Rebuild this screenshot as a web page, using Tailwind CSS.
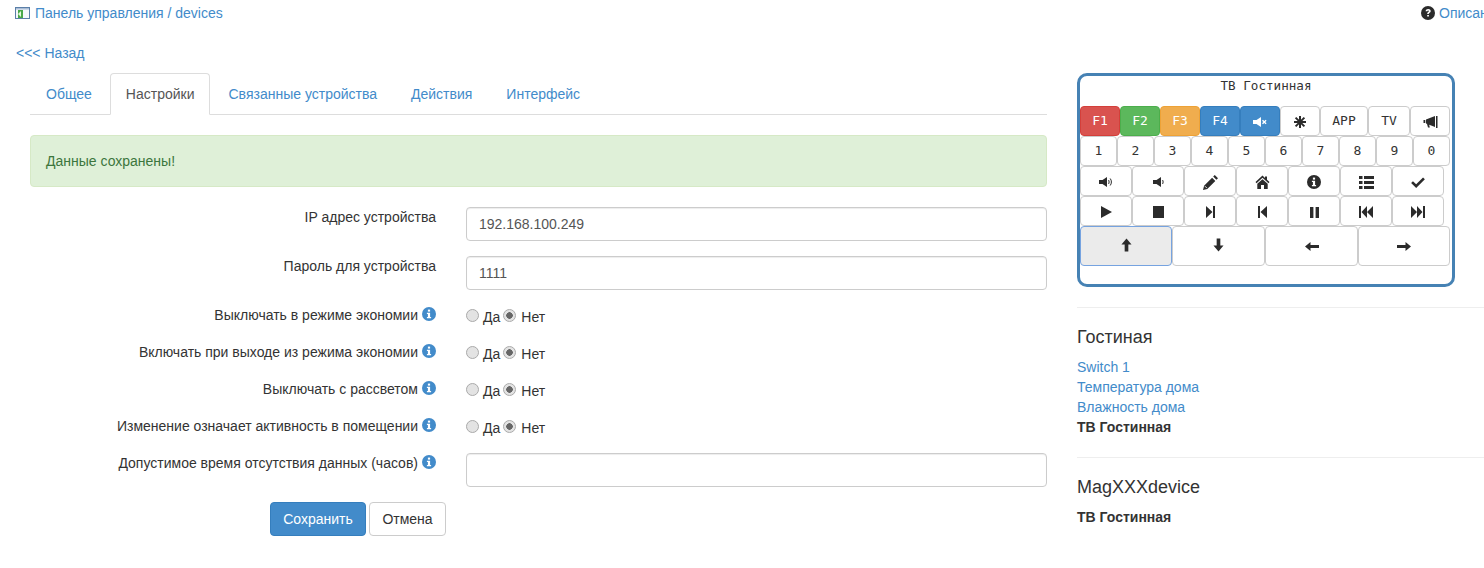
<!DOCTYPE html>
<html lang="ru">
<head>
    <meta charset="UTF-8">
    <meta name="viewport" content="width=device-width, initial-scale=1.0">
    <title>Панель управления / devices</title>
    <script src="https://cdn.jsdelivr.net/npm/@tailwindcss/browser@4"></script>
</head>
<body class="overflow-hidden bg-white text-[14px] leading-5 text-[#333] font-['Liberation_Sans',Arial,sans-serif]">
<div class="w-[1500px] h-[568px]">

    <!-- Top line -->
    <div class="flex justify-between pt-[3px] pl-[15px] h-[23px]">
        <a class="flex items-center text-[#428bca]">
            <svg class="w-[16px] h-[14px] mr-[4px]" viewBox="0 0 16 14"><rect x="0.5" y="1.5" width="14" height="11" fill="#f4f7fb" stroke="#5b7fa8"/><rect x="1" y="2" width="13" height="1.5" fill="#a9bdd6"/><rect x="3" y="4" width="5" height="8" fill="#4aa84a"/><path d="M3 8l3-3v6z" fill="#e4f8dc"/></svg>
            Панель управления / devices
        </a>
        <a class="flex items-center text-[#428bca] w-[79px]">
            <svg class="w-[14px] h-[14px] mr-[4px] shrink-0" viewBox="0 0 14 14"><circle cx="7" cy="7" r="7" fill="#2b2b2b"/><path d="M4.6 5.2C4.8 3.8 5.8 3 7.2 3c1.5 0 2.5.8 2.5 2 0 1-.6 1.5-1.3 2-.5.3-.6.5-.6 1H6.2c0-1 .3-1.5 1-2 .5-.3.7-.6.7-.9 0-.4-.3-.6-.7-.6-.5 0-.8.3-.9.8z M6.2 9h1.7v1.6H6.2z" fill="#fff"/></svg>
            Описание
        </a>
    </div>

    <div class="pt-[20px] pl-[16px] h-[50px]"><a class="text-[#428bca]">&lt;&lt;&lt; Назад</a></div>

    <div class="flex">
        <!-- Left column -->
        <div class="ml-[30px] w-[1017px]">
            <div class="flex h-[42px] border-b border-[#ddd]">
                <a class="h-[41px] px-[16px] pt-[11px] mr-[2px] text-[#428bca]">Общее</a>
                <a class="h-[42px] pl-[15px] pr-[14px] pt-[10px] mr-[3px] bg-white border border-[#ddd] border-b-white rounded-t-[4px] text-[#555]">Настройки</a>
                <a class="h-[41px] px-[16px] pt-[11px] mr-[2px] text-[#428bca]">Связанные устройства</a>
                <a class="h-[41px] px-[16px] pt-[11px] mr-[2px] text-[#428bca]">Действия</a>
                <a class="h-[41px] px-[16px] pt-[11px] text-[#428bca]">Интерфейс</a>
            </div>

            <div class="mt-[20px] h-[52px] p-[15px] border border-[#d6e9c6] bg-[#dff0d8] rounded-[4px] text-[#3c763d]">Данные сохранены!</div>

            <form class="mt-[20px]">
                <div class="flex h-[34px] mb-[15px]">
                    <label class="w-[406px] text-right">IP адрес устройства</label>
                    <input class="ml-[30px] w-[581px] h-[34px] px-[12px] border border-[#ccc] rounded-[4px] text-[#555] shadow-[inset_0_1px_1px_rgba(0,0,0,0.075)]" value="192.168.100.249">
                </div>
                <div class="flex h-[34px] mb-[15px]">
                    <label class="w-[406px] text-right">Пароль для устройства</label>
                    <input class="ml-[30px] w-[581px] h-[34px] px-[12px] border border-[#ccc] rounded-[4px] text-[#555] shadow-[inset_0_1px_1px_rgba(0,0,0,0.075)]" value="1111">
                </div>

                <div class="flex h-[37px]">
                    <label class="flex justify-end items-start w-[406px]">Выключать в режиме экономии
                        <svg class="w-[14px] h-[14px] ml-[4px] mt-[2px]" viewBox="0 0 14 14"><circle cx="7" cy="7" r="7" fill="#428bca"/><rect x="5.9" y="2.6" width="2.2" height="2" fill="#fff"/><path d="M4.9 5.7h3.2v4.2h1v1.4H4.9V9.9h1V7.1h-1z" fill="#fff"/></svg>
                    </label>
                    <div class="flex items-start ml-[30px] pt-[1px]">
                        <input type="radio" name="r1" class="appearance-none w-[13px] h-[13px] mt-[3px] rounded-full border border-[#aaa] bg-[#e3e3e3]">
                        <span class="mt-[1px] ml-[4px] mr-[3px]">Да</span>
                        <input type="radio" name="r1" checked class="appearance-none w-[13px] h-[13px] mt-[3px] rounded-full border border-[#aaa] bg-[radial-gradient(circle,#666_0_3px,#e3e3e3_3.5px)]">
                        <span class="mt-[1px] ml-[5px]">Нет</span>
                    </div>
                </div>
                <div class="flex h-[37px]">
                    <label class="flex justify-end items-start w-[406px]">Включать при выходе из режима экономии
                        <svg class="w-[14px] h-[14px] ml-[4px] mt-[2px]" viewBox="0 0 14 14"><circle cx="7" cy="7" r="7" fill="#428bca"/><rect x="5.9" y="2.6" width="2.2" height="2" fill="#fff"/><path d="M4.9 5.7h3.2v4.2h1v1.4H4.9V9.9h1V7.1h-1z" fill="#fff"/></svg>
                    </label>
                    <div class="flex items-start ml-[30px] pt-[1px]">
                        <input type="radio" name="r2" class="appearance-none w-[13px] h-[13px] mt-[3px] rounded-full border border-[#aaa] bg-[#e3e3e3]">
                        <span class="mt-[1px] ml-[4px] mr-[3px]">Да</span>
                        <input type="radio" name="r2" checked class="appearance-none w-[13px] h-[13px] mt-[3px] rounded-full border border-[#aaa] bg-[radial-gradient(circle,#666_0_3px,#e3e3e3_3.5px)]">
                        <span class="mt-[1px] ml-[5px]">Нет</span>
                    </div>
                </div>
                <div class="flex h-[37px]">
                    <label class="flex justify-end items-start w-[406px]">Выключать с рассветом
                        <svg class="w-[14px] h-[14px] ml-[4px] mt-[2px]" viewBox="0 0 14 14"><circle cx="7" cy="7" r="7" fill="#428bca"/><rect x="5.9" y="2.6" width="2.2" height="2" fill="#fff"/><path d="M4.9 5.7h3.2v4.2h1v1.4H4.9V9.9h1V7.1h-1z" fill="#fff"/></svg>
                    </label>
                    <div class="flex items-start ml-[30px] pt-[1px]">
                        <input type="radio" name="r3" class="appearance-none w-[13px] h-[13px] mt-[3px] rounded-full border border-[#aaa] bg-[#e3e3e3]">
                        <span class="mt-[1px] ml-[4px] mr-[3px]">Да</span>
                        <input type="radio" name="r3" checked class="appearance-none w-[13px] h-[13px] mt-[3px] rounded-full border border-[#aaa] bg-[radial-gradient(circle,#666_0_3px,#e3e3e3_3.5px)]">
                        <span class="mt-[1px] ml-[5px]">Нет</span>
                    </div>
                </div>
                <div class="flex h-[37px]">
                    <label class="flex justify-end items-start w-[406px]">Изменение означает активность в помещении
                        <svg class="w-[14px] h-[14px] ml-[4px] mt-[2px]" viewBox="0 0 14 14"><circle cx="7" cy="7" r="7" fill="#428bca"/><rect x="5.9" y="2.6" width="2.2" height="2" fill="#fff"/><path d="M4.9 5.7h3.2v4.2h1v1.4H4.9V9.9h1V7.1h-1z" fill="#fff"/></svg>
                    </label>
                    <div class="flex items-start ml-[30px] pt-[1px]">
                        <input type="radio" name="r4" class="appearance-none w-[13px] h-[13px] mt-[3px] rounded-full border border-[#aaa] bg-[#e3e3e3]">
                        <span class="mt-[1px] ml-[4px] mr-[3px]">Да</span>
                        <input type="radio" name="r4" checked class="appearance-none w-[13px] h-[13px] mt-[3px] rounded-full border border-[#aaa] bg-[radial-gradient(circle,#666_0_3px,#e3e3e3_3.5px)]">
                        <span class="mt-[1px] ml-[5px]">Нет</span>
                    </div>
                </div>

                <div class="flex h-[34px] mb-[15px]">
                    <label class="flex justify-end items-start w-[406px]">Допустимое время отсутствия данных (часов)
                        <svg class="w-[14px] h-[14px] ml-[4px] mt-[2px]" viewBox="0 0 14 14"><circle cx="7" cy="7" r="7" fill="#428bca"/><rect x="5.9" y="2.6" width="2.2" height="2" fill="#fff"/><path d="M4.9 5.7h3.2v4.2h1v1.4H4.9V9.9h1V7.1h-1z" fill="#fff"/></svg>
                    </label>
                    <input class="ml-[30px] w-[581px] h-[34px] px-[12px] border border-[#ccc] rounded-[4px] text-[#555] shadow-[inset_0_1px_1px_rgba(0,0,0,0.075)]">
                </div>

                <div class="flex justify-end w-[416px] gap-[3px]">
                    <button type="button" class="w-[96px] h-[34px] bg-[#428bca] border border-[#357ebd] rounded-[4px] text-white">Сохранить</button>
                    <button type="button" class="w-[77px] h-[34px] bg-white border border-[#ccc] rounded-[4px] text-[#333]">Отмена</button>
                </div>
            </form>
        </div>

        <!-- Right column -->
        <div class="ml-[30px] w-[423px]">
            <div class="w-[378px] h-[214px] border-[3px] border-[#4682b4] rounded-[10px] font-['DejaVu_Sans_Mono',monospace] text-[13px] text-[#333]">
                <div class="h-[30px] text-center text-[12.6px] leading-[20px]">ТВ Гостинная</div>

                <div class="flex h-[30px]">
                    <button class="w-[40px] bg-[#d9534f] border border-[#d43f3a] rounded-[4px] text-white">F1</button>
                    <button class="w-[40px] bg-[#5cb85c] border border-[#4cae4c] rounded-[4px] text-white">F2</button>
                    <button class="w-[40px] bg-[#f0ad4e] border border-[#eea236] rounded-[4px] text-white">F3</button>
                    <button class="w-[40px] bg-[#428bca] border border-[#357ebd] rounded-[4px] text-white">F4</button>
                    <button class="flex w-[40px] items-center justify-center bg-[#428bca] border border-[#357ebd] rounded-[4px]">
                        <svg class="w-[14px] h-[10px] translate-y-px" viewBox="0 0 14 10"><path d="M0 3h3.5L8 0v10L3.5 7H0z" fill="#fff"/><path d="M9.5 3.2l3.6 3.6M13.1 3.2L9.5 6.8" stroke="#fff" stroke-width="1.4"/></svg>
                    </button>
                    <button class="flex w-[40px] items-center justify-center bg-white border border-[#ccc] rounded-[4px]">
                        <svg class="w-[12px] h-[12px] translate-y-px" viewBox="0 0 12 12"><path d="M6 0v12M0 6h12M1.6 1.6l8.8 8.8M10.4 1.6l-8.8 8.8" stroke="#2b2b2b" stroke-width="2"/></svg>
                    </button>
                    <button class="w-[48px] bg-white border border-[#ccc] rounded-[4px]">APP</button>
                    <button class="w-[42px] bg-white border border-[#ccc] rounded-[4px]">TV</button>
                    <button class="flex w-[40px] items-center justify-center bg-white border border-[#ccc] rounded-[4px]">
                        <svg class="w-[15px] h-[12px] translate-y-px" viewBox="0 0 15 12"><path d="M3 3.5L12 0v11L3 7.5z M0.5 4H2.3v3H0.5z M4 8h2l.8 3.5H5z" fill="#2b2b2b"/><rect x="13" y="0" width="1.5" height="12" fill="#2b2b2b"/></svg>
                    </button>
                </div>

                <div class="flex h-[30px]">
                    <button class="w-[37px] bg-white border border-[#ccc] rounded-[4px]">1</button>
                    <button class="w-[37px] bg-white border border-[#ccc] rounded-[4px]">2</button>
                    <button class="w-[37px] bg-white border border-[#ccc] rounded-[4px]">3</button>
                    <button class="w-[37px] bg-white border border-[#ccc] rounded-[4px]">4</button>
                    <button class="w-[37px] bg-white border border-[#ccc] rounded-[4px]">5</button>
                    <button class="w-[37px] bg-white border border-[#ccc] rounded-[4px]">6</button>
                    <button class="w-[37px] bg-white border border-[#ccc] rounded-[4px]">7</button>
                    <button class="w-[37px] bg-white border border-[#ccc] rounded-[4px]">8</button>
                    <button class="w-[37px] bg-white border border-[#ccc] rounded-[4px]">9</button>
                    <button class="w-[37px] bg-white border border-[#ccc] rounded-[4px]">0</button>
                </div>

                <div class="flex h-[30px]">
                    <button class="flex w-[52px] items-center justify-center bg-white border border-[#ccc] rounded-[4px]">
                        <svg class="w-[14px] h-[10px] translate-y-px" viewBox="0 0 14 10"><path d="M0 3h3.5L8 0v10L3.5 7H0z" fill="#2b2b2b"/><path d="M9.5 3c.8 1 .8 3 0 4M11.2 1.5c1.6 2 1.6 5 0 7" fill="none" stroke="#2b2b2b"/></svg>
                    </button>
                    <button class="flex w-[52px] items-center justify-center bg-white border border-[#ccc] rounded-[4px]">
                        <svg class="w-[11px] h-[10px] translate-y-px" viewBox="0 0 11 10"><path d="M0 3h3.5L8 0v10L3.5 7H0z" fill="#2b2b2b"/><path d="M9.5 3c.8 1 .8 3 0 4" fill="none" stroke="#2b2b2b"/></svg>
                    </button>
                    <button class="flex w-[52px] items-center justify-center bg-white border border-[#ccc] rounded-[4px]">
                        <svg class="w-[15px] h-[15px] translate-y-px" viewBox="0 0 14 14"><path d="M0 14l1-4 7.5-7.5 3 3L4 13z M9.5 1.5L11 0l3 3-1.5 1.5z" fill="#2b2b2b"/><path d="M1.8 10.4l1.8 1.8" stroke="#fff" stroke-width=".8"/></svg>
                    </button>
                    <button class="flex w-[52px] items-center justify-center bg-white border border-[#ccc] rounded-[4px]">
                        <svg class="w-[15px] h-[14px] translate-y-px" viewBox="0 0 14 14"><path d="M7 .5L0 7l1 1.2L7 2.8l6 5.4L14 7l-2.5-2.3V1.5h-2v1.4z M1.8 8.8L7 4.2l5.2 4.6V14H8.5V10h-3v4H1.8z" fill="#2b2b2b"/></svg>
                    </button>
                    <button class="flex w-[52px] items-center justify-center bg-white border border-[#ccc] rounded-[4px]">
                        <svg class="w-[14px] h-[14px] translate-y-px" viewBox="0 0 14 14"><circle cx="7" cy="7" r="7" fill="#2b2b2b"/><rect x="5.9" y="2.6" width="2.2" height="2" fill="#fff"/><path d="M4.9 5.7h3.2v4.2h1v1.4H4.9V9.9h1V7.1h-1z" fill="#fff"/></svg>
                    </button>
                    <button class="flex w-[52px] items-center justify-center bg-white border border-[#ccc] rounded-[4px]">
                        <svg class="w-[15px] h-[13px] translate-y-px" viewBox="0 0 15 13"><path d="M0 0h3.5v3H0z M5 0h10v3H5z M0 5h3.5v3H0z M5 5h10v3H5z M0 10h3.5v3H0z M5 10h10v3H5z" fill="#2b2b2b"/></svg>
                    </button>
                    <button class="flex w-[52px] items-center justify-center bg-white border border-[#ccc] rounded-[4px]">
                        <svg class="w-[14px] h-[11px] translate-y-px" viewBox="0 0 15 12"><path d="M0 6.5L2 4.5 5.5 8 13 .5 15 2.5 5.5 12z" fill="#2b2b2b"/></svg>
                    </button>
                </div>

                <div class="flex h-[30px]">
                    <button class="flex w-[52px] items-center justify-center bg-white border border-[#ccc] rounded-[4px]">
                        <svg class="w-[11px] h-[12px] translate-y-px" viewBox="0 0 11 12"><path d="M0 0l11 6-11 6z" fill="#2b2b2b"/></svg>
                    </button>
                    <button class="flex w-[52px] items-center justify-center bg-white border border-[#ccc] rounded-[4px]">
                        <svg class="w-[11px] h-[12px] translate-y-px" viewBox="0 0 11 12"><rect width="11" height="12" fill="#2b2b2b"/></svg>
                    </button>
                    <button class="flex w-[52px] items-center justify-center bg-white border border-[#ccc] rounded-[4px]">
                        <svg class="w-[9px] h-[12px] translate-y-px" viewBox="0 0 9 12"><path d="M0 0l6.5 6L0 12z M7 0h2v12H7z" fill="#2b2b2b"/></svg>
                    </button>
                    <button class="flex w-[52px] items-center justify-center bg-white border border-[#ccc] rounded-[4px]">
                        <svg class="w-[9px] h-[12px] translate-y-px" viewBox="0 0 9 12"><path d="M9 0L2.5 6 9 12z M0 0h2v12H0z" fill="#2b2b2b"/></svg>
                    </button>
                    <button class="flex w-[52px] items-center justify-center bg-white border border-[#ccc] rounded-[4px]">
                        <svg class="w-[9px] h-[11px] translate-y-px" viewBox="0 0 9 11"><path d="M0 0h3.4v11H0z M5.6 0H9v11H5.6z" fill="#2b2b2b"/></svg>
                    </button>
                    <button class="flex w-[52px] items-center justify-center bg-white border border-[#ccc] rounded-[4px]">
                        <svg class="w-[14px] h-[12px] translate-y-px" viewBox="0 0 14 12"><path d="M0 0h2v12H0z M2.5 6L8 0v12z M8 6l6-6v12z" fill="#2b2b2b"/></svg>
                    </button>
                    <button class="flex w-[52px] items-center justify-center bg-white border border-[#ccc] rounded-[4px]">
                        <svg class="w-[14px] h-[12px] translate-y-px" viewBox="0 0 14 12"><path d="M12 0h2v12h-2z M11.5 6L6 0v12z M6 6L0 0v12z" fill="#2b2b2b"/></svg>
                    </button>
                </div>

                <div class="flex h-[40px]">
                    <button class="flex w-[92px] items-center justify-center bg-[#ebebeb] border border-[#76a3e0] rounded-[4px]">
                        <svg class="w-[11px] h-[14px] -translate-y-px" viewBox="0 0 12 14"><path d="M6 0l5.5 6.5H8V14H4V6.5H.5z" fill="#2b2b2b"/></svg>
                    </button>
                    <button class="flex w-[93px] items-center justify-center bg-white border border-[#ccc] rounded-[4px]">
                        <svg class="w-[11px] h-[14px] -translate-y-px" viewBox="0 0 12 14"><path d="M6 14L.5 7.5H4V0h4v7.5h3.5z" fill="#2b2b2b"/></svg>
                    </button>
                    <button class="flex w-[93px] items-center justify-center bg-white border border-[#ccc] rounded-[4px]">
                        <svg class="w-[14px] h-[9px]" viewBox="0 0 14 9"><path d="M0 4.5L5.5 0v3H14v3H5.5v3z" fill="#2b2b2b"/></svg>
                    </button>
                    <button class="flex w-[92px] items-center justify-center bg-white border border-[#ccc] rounded-[4px]">
                        <svg class="w-[14px] h-[9px]" viewBox="0 0 14 9"><path d="M14 4.5L8.5 0v3H0v3h8.5v3z" fill="#2b2b2b"/></svg>
                    </button>
                </div>
            </div>

            <hr class="mt-[20px] border-[#eee]">
            <h4 class="mt-[19px] mb-[10px] text-[18px] leading-5">Гостиная</h4>
            <a class="block text-[#428bca]">Switch 1</a>
            <a class="block text-[#428bca]">Температура дома</a>
            <a class="block text-[#428bca]">Влажность дома</a>
            <div class="font-bold">ТВ Гостинная</div>

            <hr class="mt-[20px] border-[#eee]">
            <h4 class="mt-[19px] mb-[10px] text-[18px] leading-5">MagXXXdevice</h4>
            <div class="font-bold">ТВ Гостинная</div>
        </div>
    </div>
</div>
</body>
</html>
